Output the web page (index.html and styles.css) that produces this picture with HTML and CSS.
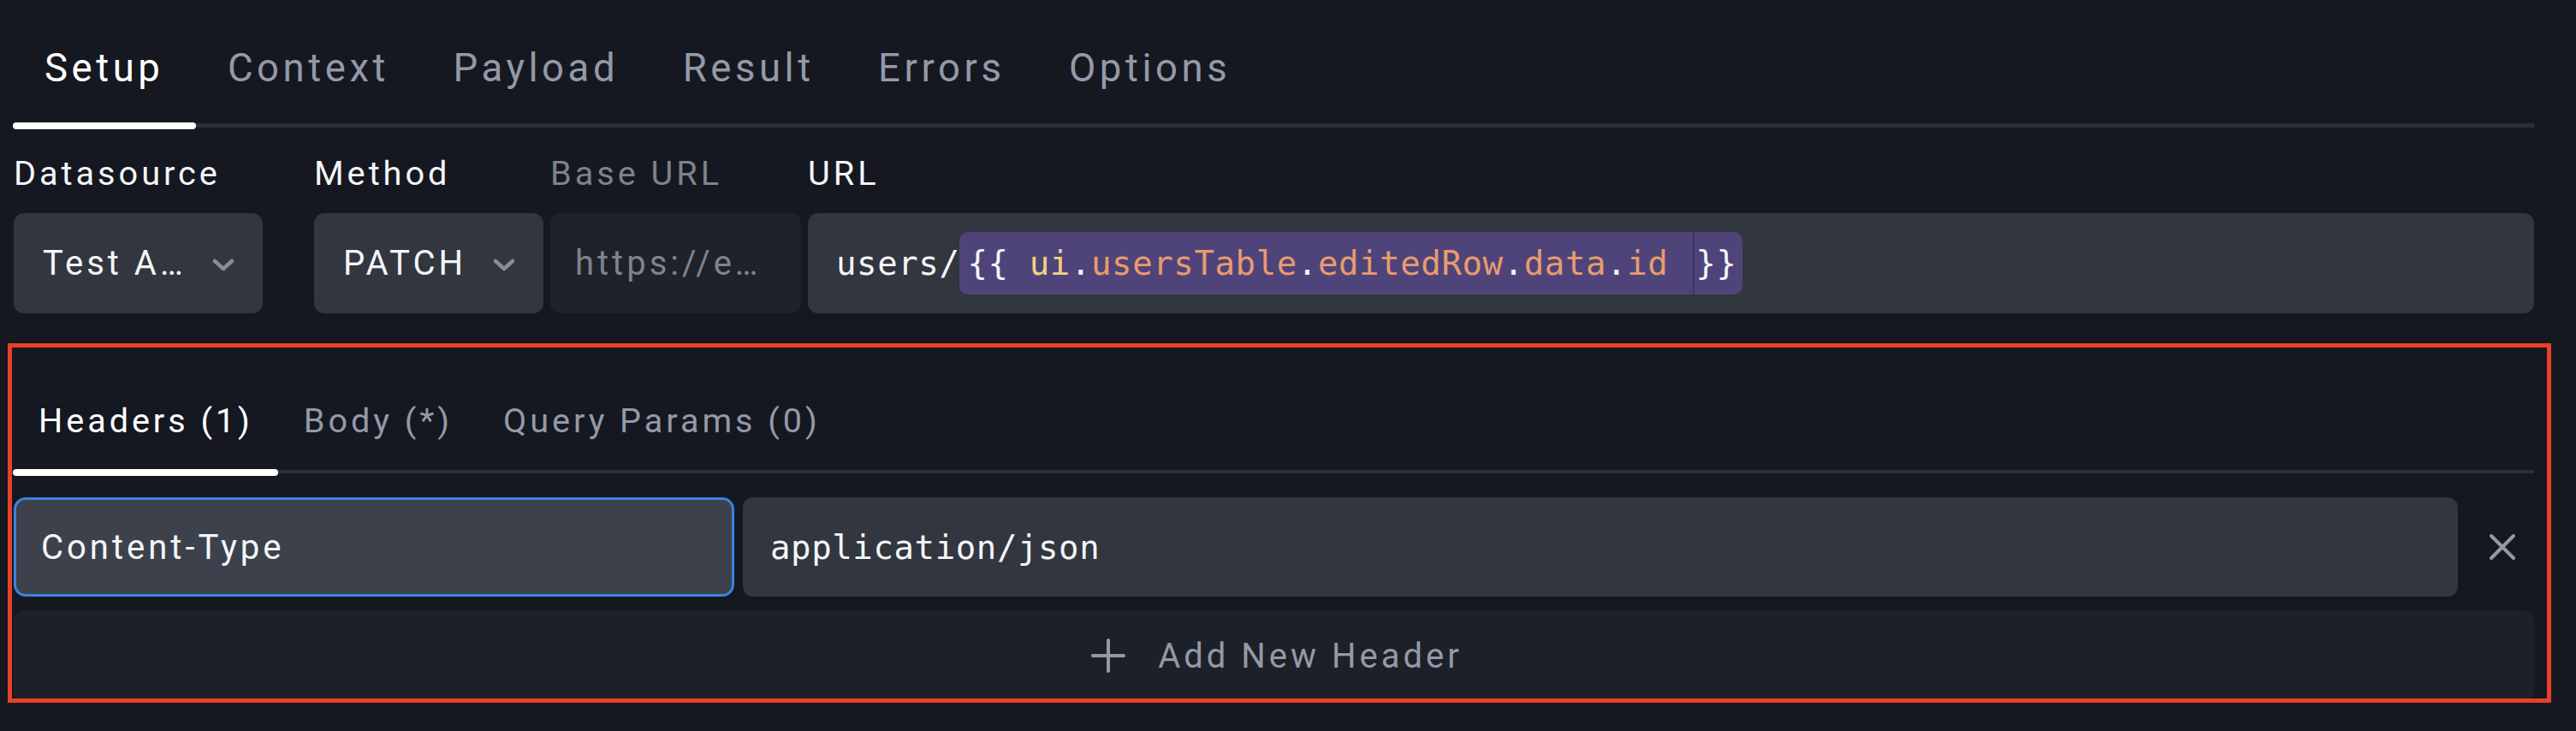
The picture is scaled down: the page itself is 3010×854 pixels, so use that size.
FILE: index.html
```html
<!DOCTYPE html>
<html>
<head>
<meta charset="utf-8">
<link rel="stylesheet" href="styles.css">
</head>
<body>
<div class="page">
  <div class="tabs">
    <div class="tab active">Setup</div>
    <div class="tab">Context</div>
    <div class="tab">Payload</div>
    <div class="tab">Result</div>
    <div class="tab">Errors</div>
    <div class="tab">Options</div>
  </div>

  <div class="fields">
    <div class="field f-ds">
      <div class="label">Datasource</div>
      <div class="select">
        <span class="sel-text">Test A…</span>
        <svg class="chev" width="26" height="15" viewBox="0 0 26 15"><path d="M3 3 L13 12 L23 3" fill="none" stroke="#878c98" stroke-width="4.5" stroke-linecap="round" stroke-linejoin="round"/></svg>
      </div>
    </div>
    <div class="field f-method">
      <div class="label">Method</div>
      <div class="select">
        <span class="sel-text">PATCH</span>
        <svg class="chev" width="26" height="15" viewBox="0 0 26 15"><path d="M3 3 L13 12 L23 3" fill="none" stroke="#878c98" stroke-width="4.5" stroke-linecap="round" stroke-linejoin="round"/></svg>
      </div>
    </div>
    <div class="field f-base">
      <div class="label dim">Base URL</div>
      <div class="input disabled"><span class="placeholder">https://e…</span></div>
    </div>
    <div class="field f-url">
      <div class="label">URL</div>
      <div class="input mono-input">
        <span class="mono">users/</span><span class="tpl mono">{{ <span class="t-ui">ui</span>.<span class="t-prop">usersTable</span>.<span class="t-prop">editedRow</span>.<span class="t-prop">data</span>.<span class="t-prop">id</span> <span class="caret"></span>}}</span>
      </div>
    </div>
  </div>

  <div class="section">
    <div class="subtabs">
      <div class="subtab active">Headers (1)</div>
      <div class="subtab">Body (*)</div>
      <div class="subtab">Query Params (0)</div>
    </div>
    <div class="header-row">
      <div class="input key-input focused">Content-Type</div>
      <div class="input val-input"><span class="mono">application/json</span></div>
      <button class="remove">
        <svg width="32" height="32" viewBox="0 0 32 32"><path d="M3 3 L29 29 M29 3 L3 29" stroke="#9499a6" stroke-width="4" stroke-linecap="round"/></svg>
      </button>
    </div>
    <button class="add">
      <svg width="40" height="40" viewBox="0 0 40 40"><path d="M20 2 V38 M2 20 H38" stroke="#9499a6" stroke-width="4" stroke-linecap="round"/></svg>
      <span>Add New Header</span>
    </button>
  </div>
</div>
<div class="annot"></div>
</body>
</html>
```

FILE: styles.css
```css
* { box-sizing: border-box; }
html, body { margin: 0; padding: 0; }
body {
  background: #151820;
  width: 3010px;
  height: 854px;
  overflow: hidden;
  font-family: Roboto, "Noto Sans", sans-serif;
  color: #f4f5f7;
}
.page {
  padding-left: 15px;
  width: 2961px;
}
.tabs {
  display: flex;
  border-bottom: 5px solid #2c2f39;
}
.tab {
  position: relative;
  padding: 53px 37.5px 37px 37px;
  font-size: 45.5px;
  line-height: 54px;
  letter-spacing: 0.1em;
  color: #9499a8;
}
.tab.active { color: #ffffff; }
.tab.active::after {
  content: "";
  position: absolute;
  left: 0; right: 0; bottom: -7px;
  height: 8px;
  border-radius: 4px;
  background: #ffffff;
}
.fields {
  display: flex;
  margin-top: 31px;
  padding-left: 1px;
}
.field { display: flex; flex-direction: column; }
.f-ds { width: 291px; margin-right: 60px; }
.f-method { width: 268px; margin-right: 8px; }
.f-base { width: 293px; margin-right: 8px; }
.f-url { flex: 1; }
.label {
  font-size: 39.7px;
  line-height: 46px;
  letter-spacing: 0.1em;
  color: #f4f5f7;
  margin-bottom: 23px;
  white-space: nowrap;
}
.label.dim { color: #7e828b; }
.select, .input {
  height: 117px;
  border-radius: 12px;
  background: #32363f;
  display: flex;
  align-items: center;
  font-size: 40px;
  letter-spacing: 0.1em;
  white-space: nowrap;
  overflow: hidden;
}
.select {
  padding: 0 33px 0 34px;
  justify-content: space-between;
}
.sel-text { color: #f4f5f7; }
.chev { flex: none; margin-top: 4px; }
.input.disabled {
  background: #1f2229;
  padding-left: 29px;
}
.placeholder { color: #7f838d; }
.mono-input { padding-left: 33px; }
.mono {
  font-family: "DejaVu Sans Mono", "Liberation Mono", monospace;
  font-size: 39px;
  letter-spacing: 0.6px;
  color: #f4f5f7;
}
.tpl {
  display: inline-block;
  height: 73px;
  line-height: 73px;
  padding: 0 6px 0 9px;
  border-radius: 10px;
  background: #4f4479;
  white-space: pre;
  vertical-align: middle;
}
.t-ui { color: #f4d17f; }
.t-prop { color: #e99b6e; }
.caret {
  display: inline-block;
  width: 2px;
  height: 73px;
  background: #3e3566;
  margin: 0 1px 0 5px;
  vertical-align: top;
}
.section {
  margin-top: 63px;
}
.subtabs {
  display: flex;
  border-bottom: 4px solid #2c2f39;
}
.subtab {
  position: relative;
  padding: 40px 29px 34px 30px;
  font-size: 39.6px;
  line-height: 46px;
  letter-spacing: 0.1em;
  color: #9499a8;
}
.subtab.active { color: #ffffff; }
.subtab.active::after {
  content: "";
  position: absolute;
  left: 0; right: 0; bottom: -7px;
  height: 8px;
  border-radius: 4px;
  background: #ffffff;
}
.header-row {
  display: flex;
  align-items: center;
  margin-top: 28px;
  padding-left: 1px;
}
.key-input {
  width: 842px;
  height: 116px;
  padding-left: 29px;
  background: #3d414c;
  border: 3px solid #3a84e0;
  border-radius: 14px;
  color: #f4f5f7;
  margin-right: 10px;
}
.val-input {
  flex: 1;
  height: 116px;
  padding-left: 32px;
}
.remove {
  width: 32px;
  height: 32px;
  margin: 0 21px 0 36px;
  padding: 0;
  border: 0;
  background: none;
  display: flex;
}
.add {
  margin-top: 16px;
  margin-left: 1px;
  width: 2945px;
  height: 106px;
  border: 0;
  border-radius: 12px;
  background: #1d2029;
  display: flex;
  align-items: center;
  justify-content: center;
  gap: 38px;
  font-family: Roboto, "Noto Sans", sans-serif;
  font-size: 40px;
  letter-spacing: 0.1em;
  color: #9499a6;
  padding: 0 0 0 7px;
}
.annot {
  position: absolute;
  left: 9px;
  top: 401px;
  width: 2972px;
  height: 420px;
  border: 5px solid #e9402a;
  pointer-events: none;
}
```
